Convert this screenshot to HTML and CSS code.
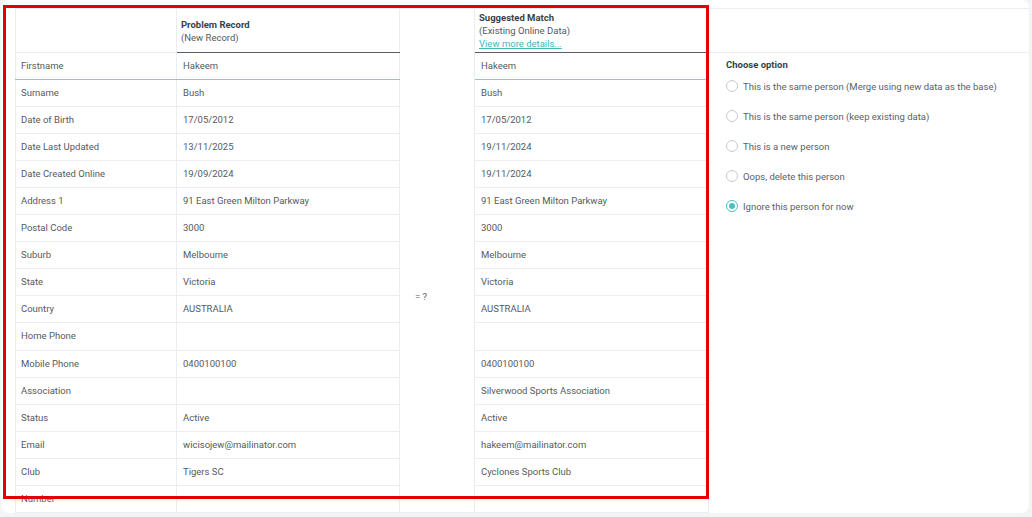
FILE: index.html
```html
<!DOCTYPE html>
<html>
<head>
<meta charset="utf-8">
<link rel="stylesheet" href="styles.css">
</head>
<body>
<div class="card">
  <table class="cmp">
    <colgroup>
      <col class="c-label"><col class="c-new"><col class="c-mid"><col class="c-old">
    </colgroup>
    <thead>
      <tr>
        <th class="h-label"></th>
        <th class="h-rec"><b>Problem Record</b><span>(New Record)</span></th>
        <th class="h-mid"></th>
        <th class="h-rec h-old"><b>Suggested Match</b><span>(Existing Online Data)</span><a href="#">View more details...</a></th>
      </tr>
    </thead>
    <tbody>
      <tr class="active"><td class="lbl">Firstname</td><td class="v1">Hakeem</td><td class="mid" rowspan="17">= ?</td><td class="v2">Hakeem</td></tr>
      <tr><td class="lbl">Surname</td><td class="v1">Bush</td><td class="v2">Bush</td></tr>
      <tr><td class="lbl">Date of Birth</td><td class="v1">17/05/2012</td><td class="v2">17/05/2012</td></tr>
      <tr><td class="lbl">Date Last Updated</td><td class="v1">13/11/2025</td><td class="v2">19/11/2024</td></tr>
      <tr><td class="lbl">Date Created Online</td><td class="v1">19/09/2024</td><td class="v2">19/11/2024</td></tr>
      <tr><td class="lbl">Address 1</td><td class="v1">91 East Green Milton Parkway</td><td class="v2">91 East Green Milton Parkway</td></tr>
      <tr><td class="lbl">Postal Code</td><td class="v1">3000</td><td class="v2">3000</td></tr>
      <tr><td class="lbl">Suburb</td><td class="v1">Melbourne</td><td class="v2">Melbourne</td></tr>
      <tr><td class="lbl">State</td><td class="v1">Victoria</td><td class="v2">Victoria</td></tr>
      <tr><td class="lbl">Country</td><td class="v1">AUSTRALIA</td><td class="v2">AUSTRALIA</td></tr>
      <tr><td class="lbl">Home Phone</td><td class="v1"></td><td class="v2"></td></tr>
      <tr><td class="lbl">Mobile Phone</td><td class="v1">0400100100</td><td class="v2">0400100100</td></tr>
      <tr><td class="lbl">Association</td><td class="v1"></td><td class="v2">Silverwood Sports Association</td></tr>
      <tr><td class="lbl">Status</td><td class="v1">Active</td><td class="v2">Active</td></tr>
      <tr><td class="lbl">Email</td><td class="v1">wicisojew@mailinator.com</td><td class="v2">hakeem@mailinator.com</td></tr>
      <tr><td class="lbl">Club</td><td class="v1">Tigers SC</td><td class="v2">Cyclones Sports Club</td></tr>
      <tr><td class="lbl">Number</td><td class="v1"></td><td class="v2"></td></tr>
    </tbody>
  </table>
  <div class="panel">
    <div class="panel-head"></div>
    <div class="panel-body">
      <div class="opt-title">Choose option</div>
      <label class="opt"><span class="radio"></span>This is the same person (Merge using new data as the base)</label>
      <label class="opt"><span class="radio"></span>This is the same person (keep existing data)</label>
      <label class="opt"><span class="radio"></span>This is a new person</label>
      <label class="opt"><span class="radio"></span>Oops, delete this person</label>
      <label class="opt"><span class="radio checked"></span>Ignore this person for now</label>
    </div>
  </div>
</div>
<div class="highlight"></div>
</body>
</html>
```
FILE: styles.css
```css
html, body {
  margin: 0;
  padding: 0;
}
body {
  background: #f3f4f6;
  font-family: Roboto, "Liberation Sans", sans-serif;
  font-size: 9.5px;
  color: #555a61;
  width: 1032px;
  height: 517px;
  overflow: hidden;
  position: relative;
}
.card {
  margin-left: 1px;
  width: 1028px;
  height: 513px;
  background: #fff;
  border-radius: 8px;
  box-sizing: border-box;
  padding: 8px 0 0 14px;
  display: flex;
  overflow: hidden;
}
.cmp {
  border-collapse: collapse;
  table-layout: fixed;
  width: 693px;
  flex: none;
}
.c-label { width: 161px; }
.c-new { width: 223px; }
.c-mid { width: 75px; }
.c-old { width: 234px; }
th, td {
  border: 1px solid #eaeef2;
  padding: 0;
  text-align: left;
  vertical-align: middle;
}
thead th {
  height: 43px;
  font-weight: normal;
  border-top: 1px solid #eaeef2;
}
.h-rec {
  padding-left: 4px;
  border-bottom: 1px solid #5a5d61;
  line-height: 13px;
}
.h-rec b {
  display: block;
  font-weight: 700;
  color: #3b3f45;
}
.h-rec span, .h-rec a {
  display: block;
}
.h-rec a {
  color: #45b6b9;
  text-decoration: underline;
}
.h-mid {
  border-bottom-color: transparent;
}
tbody td {
  height: 26px;
  line-height: 12px;
}
.lbl { padding-left: 5px; }
.v1, .v2 { padding-left: 6px; }
.mid {
  padding-left: 15px;
  padding-top: 28px;
  border-top-color: transparent;
}
tr.active .lbl, tr.active .v1, tr.active .v2 {
  border-bottom: 1px solid #7fcfcf;
}
.panel {
  flex: 1;
  display: flex;
  flex-direction: column;
}
.panel-head {
  height: 43px;
  border-top: 1px solid #eaeef2;
  border-bottom: 1px solid #eaeef2;
}
.panel-body {
  padding: 6px 0 0 17px;
  display: flex;
  flex-direction: column;
}
.opt-title {
  font-weight: 700;
  color: #3b3f45;
  line-height: 12px;
}
.opt {
  display: flex;
  align-items: center;
  height: 30px;
  color: #5b6068;
}
.radio {
  width: 12px;
  height: 12px;
  box-sizing: border-box;
  border: 1px solid #c7ccd2;
  border-radius: 50%;
  margin-right: 5px;
  flex: none;
  position: relative;
}
.radio.checked {
  border-color: #4fbcc0;
}
.radio.checked::after {
  content: "";
  position: absolute;
  left: 2px;
  top: 2px;
  width: 6px;
  height: 6px;
  border-radius: 50%;
  background: #4fbcc0;
}
.highlight {
  position: absolute;
  left: 3px;
  top: 5px;
  width: 706px;
  height: 494px;
  box-sizing: border-box;
  border: 3.5px solid #e30000;
  pointer-events: none;
}
```
